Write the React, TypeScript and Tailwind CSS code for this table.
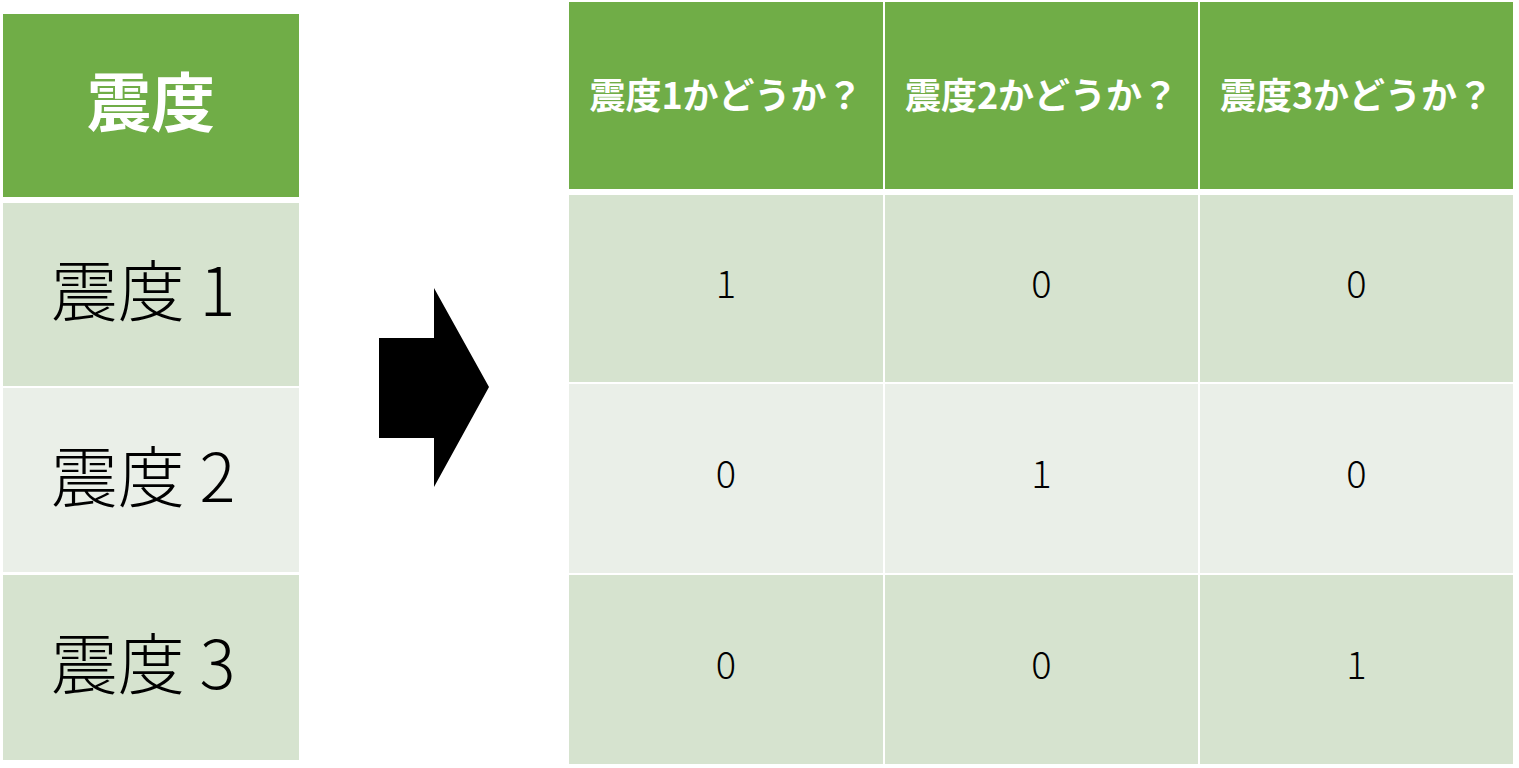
import React from 'react';

const font = { fontFamily: '"Noto Sans CJK JP", "Noto Sans", sans-serif' };

const leftRows = [
  { label: '震度 1', bg: 'bg-[#d6e3cf]', h: 'h-[183px]', mt: 'mt-[6px]' },
  { label: '震度 2', bg: 'bg-[#eaefe8]', h: 'h-[184px]', mt: 'mt-[2px]' },
  { label: '震度 3', bg: 'bg-[#d6e3cf]', h: 'h-[185px]', mt: 'mt-[3px]' },
];

const headers = ['震度1かどうか？', '震度2かどうか？', '震度3かどうか？'];

const rows = [
  { values: [1, 0, 0], bg: 'bg-[#d6e3cf]', h: 'h-[187px]', mt: 'mt-[6px]' },
  { values: [0, 1, 0], bg: 'bg-[#eaefe8]', h: 'h-[189px]', mt: 'mt-[2px]' },
  { values: [0, 0, 1], bg: 'bg-[#d6e3cf]', h: 'h-[189px]', mt: 'mt-[2px]' },
];

function Arrow() {
  return (
    <svg width="110" height="199" viewBox="0 0 110 199" className="block">
      <polygon points="0,50 55,50 55,0 110,99 55,199 55,150 0,150" fill="#000" />
    </svg>
  );
}

export default function App() {
  return (
    <div className="w-[1519px] h-[768px] bg-white flex items-start overflow-hidden" style={font}>
      {/* left: original column */}
      <div className="ml-[3px] mt-[14px] w-[296px] flex flex-col">
        <div className="h-[183px] bg-[#70ad47] flex items-center justify-center pb-[16px]">
          <span className="text-white text-[64px] font-bold leading-none">震度</span>
        </div>
        {leftRows.map((r) => (
          <div key={r.label} className={`${r.h} ${r.mt} ${r.bg} flex items-center justify-center pr-[16px] pb-[16px]`}>
            <span className="text-black text-[67px] font-light leading-none">{r.label}</span>
          </div>
        ))}
      </div>

      <div className="ml-[80px] mt-[288px]">
        <Arrow />
      </div>

      {/* right: one-hot table */}
      <div className="ml-[80px] mt-[2px] flex flex-col">
        <div className="grid grid-cols-[314px_313px_313px] gap-x-[2px] h-[187px]">
          {headers.map((h) => (
            <div key={h} className="bg-[#70ad47] flex items-center justify-center pb-[6px]">
              <span className="text-white text-[36px] font-bold leading-none">{h}</span>
            </div>
          ))}
        </div>
        {rows.map((r, i) => (
          <div key={i} className={`grid grid-cols-[314px_313px_313px] gap-x-[2px] ${r.h} ${r.mt}`}>
            {r.values.map((v, j) => (
              <div key={j} className={`${r.bg} flex items-center justify-center pb-[14px]`}>
                <span className="text-black text-[38px] font-light leading-none">{v}</span>
              </div>
            ))}
          </div>
        ))}
      </div>
    </div>
  );
}
